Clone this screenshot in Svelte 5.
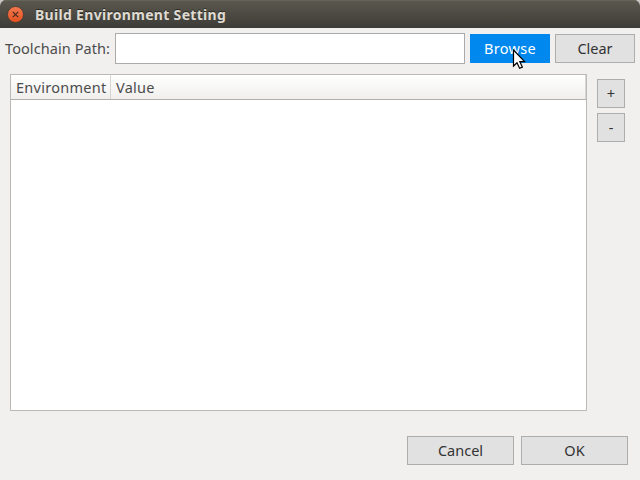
<script>
  let path = $state('');
  const columns = ['Environment', 'Value'];
</script>

<div class="desktop">
  <div class="window">
    <header>
      <svg class="close" width="18" height="18" viewBox="0 0 18 18" aria-label="Close">
        <defs>
          <linearGradient id="orange" x1="0" y1="0" x2="0" y2="1">
            <stop offset="0" stop-color="#f4794f" />
            <stop offset="1" stop-color="#e4501f" />
          </linearGradient>
        </defs>
        <circle cx="9.5" cy="8.5" r="8" fill="url(#orange)" stroke="#3f3a33" stroke-width=".8" />
        <path d="M6.8 5.8l5.4 5.4M12.2 5.8l-5.4 5.4" stroke="#3c2b22" stroke-width="1.1" />
      </svg>
      <h1>Build Environment Setting</h1>
    </header>

    <div class="path-row">
      <label for="toolchain">Toolchain Path:</label>
      <input id="toolchain" bind:value={path} />
      <button class="primary"><span class="browse">Browse</span></button>
      <button><span>Clear</span></button>
    </div>

    <main>
      <div class="table">
        <div class="head">
          {#each columns as name}
            <div class="cell">{name}</div>
          {/each}
        </div>
      </div>
      <div class="tools">
        <button><span>+</span></button>
        <button><span>-</span></button>
      </div>
    </main>

    <footer>
      <button><span>Cancel</span></button>
      <button><span>OK</span></button>
    </footer>
  </div>

  <svg class="cursor" width="16" height="22" viewBox="0 0 16 22">
    <path d="M2 1.5V17l3.6-3.4 2.6 5.8 3-1.3-2.5-5.6h5z" fill="#555" opacity=".35" />
    <path d="M1.5 1v16l3.5-3.3 2.6 5.6 2.7-1.2-2.5-5.4h4.8z" fill="#fff" stroke="#000" stroke-width="1.2" />
  </svg>
</div>

<style>
  .desktop {
    position: relative;
    width: 640px;
    height: 480px;
    overflow: hidden;
    background: #c9c6c3;
    font: 14.5px/20px 'Noto Sans', sans-serif;
    color: #4c4c4c;
  }
  .window {
    height: 100%;
    display: flex;
    flex-direction: column;
    background: #f1f0ee;
    border-radius: 6px 6px 0 0;
    overflow: hidden;
  }
  header {
    height: 28px;
    flex: none;
    box-sizing: border-box;
    display: flex;
    align-items: center;
    padding: 1px 0 0 6px;
    background: linear-gradient(#5b584e, #3d3c37);
    box-shadow: inset 0 1px #66635a;
  }
  h1 {
    margin: 0 0 0 11px;
    font-size: 14px;
    line-height: 20px;
    font-weight: 700;
    color: #dfdbd2;
    letter-spacing: 0.31px;
    text-shadow: 0 -1px #2b2a26;
    white-space: nowrap;
  }
  button {
    box-sizing: border-box;
    height: 29px;
    padding: 0 0 2px;
    margin: 0;
    border: 1px solid #adadad;
    border-radius: 0;
    background: #e1e1e1;
    font: inherit;
    color: #333;
    white-space: nowrap;
  }
  .path-row {
    display: flex;
    align-items: center;
    gap: 5px;
    padding: 5px 5px 0;
    height: 31px;
  }
  label {
    width: 105px;
    padding-bottom: 2px;
    letter-spacing: 0.08px;
    white-space: nowrap;
  }
  input {
    width: 350px;
    height: 31px;
    box-sizing: border-box;
    border: 1px solid #ababab;
    background: #fff;
    padding: 0 4px;
    font: inherit;
    outline: none;
  }
  .path-row button {
    width: 80px;
  }
  .path-row .primary {
    background: #0088ee;
    border-color: #0088ee;
    color: #fff;
  }
  .browse {
    letter-spacing: 0.35px;
  }
  main {
    display: flex;
    padding: 10px 0 0 10px;
    height: 337px;
  }
  .table {
    width: 577px;
    box-sizing: border-box;
    border: 1px solid #bab9b7;
    background: #fff;
  }
  .head {
    display: flex;
    height: 24px;
    background: linear-gradient(#fff, #f0efed);
    border-bottom: 1px solid #b0afad;
  }
  .cell {
    box-sizing: border-box;
    padding: 2px 0 0 5px;
    border-right: 1px solid #d8d6d3;
    letter-spacing: 0.27px;
    white-space: nowrap;
  }
  .cell:first-child {
    width: 100px;
  }
  .cell:last-child {
    flex: 1;
  }
  .tools {
    display: flex;
    flex-direction: column;
    gap: 5px;
    padding: 5px 0 0 10px;
  }
  .tools button {
    width: 28px;
  }
  footer {
    display: flex;
    justify-content: flex-end;
    gap: 7px;
    padding: 25px 12px 0 0;
  }
  footer button {
    width: 107px;
  }
  .cursor {
    position: absolute;
    left: 512px;
    top: 49px;
    pointer-events: none;
  }
</style>
